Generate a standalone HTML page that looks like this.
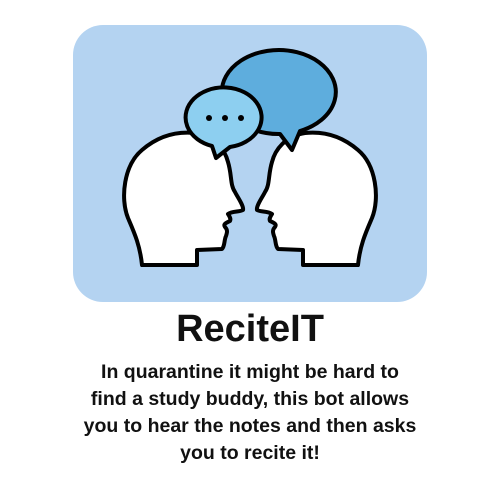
<!DOCTYPE html>
<html><head><style>
html,body{margin:0;padding:0;background:#fff;width:500px;height:500px;overflow:hidden;}
.box{position:absolute;left:73px;top:25px;width:354px;height:277px;background:#b4d3f1;border-radius:30px;}
svg{position:absolute;left:0;top:0;}
.t{position:absolute;left:0;width:500px;text-align:center;font-family:"Liberation Sans",sans-serif;font-weight:bold;color:#111;}
</style></head><body>
<div class="box"></div>
<svg width="500" height="500" viewBox="0 0 500 500">
<g stroke="#000" stroke-width="4" stroke-linejoin="round" stroke-linecap="round">
<path id="h" fill="#fff" d="M142,265 C140,245 134,232 128,218 C120,198 124,165 142,150 C157,137 175,131 195,133 C215,136 225,150 228,162 C232,175 230,185 235,192 C238,198 244,206 243,210 C240,212 232,211 228,214 C230,217 231,219 230,221 C226,223 223,224 225,227 C228,230 227,233 226,236 C224,240 225,246 222,249 L197,250 L197,265 Z"/>
<use href="#h" transform="translate(500,0) scale(-1,1)"/>
<path fill="#5eaddd" d="M280,134 A57,42 0 1 1 300,131 L292,150 Z"/>
<path fill="#8dcff0" d="M212,146 A38,30 0 1 1 230,147 L216,158 Z"/>
</g>
<circle cx="209" cy="118" r="3" fill="#000"/>
<circle cx="225" cy="118" r="3" fill="#000"/>
<circle cx="241" cy="118" r="3" fill="#000"/>
</svg>
<div class="t" style="top:307px;font-size:38px;line-height:44px;">ReciteIT</div>
<div class="t" style="top:359px;font-size:19.5px;line-height:27px;">In quarantine it might be hard to<br>find a study buddy, this bot allows<br>you to hear the notes and then asks<br>you to recite it!</div>
</body></html>
